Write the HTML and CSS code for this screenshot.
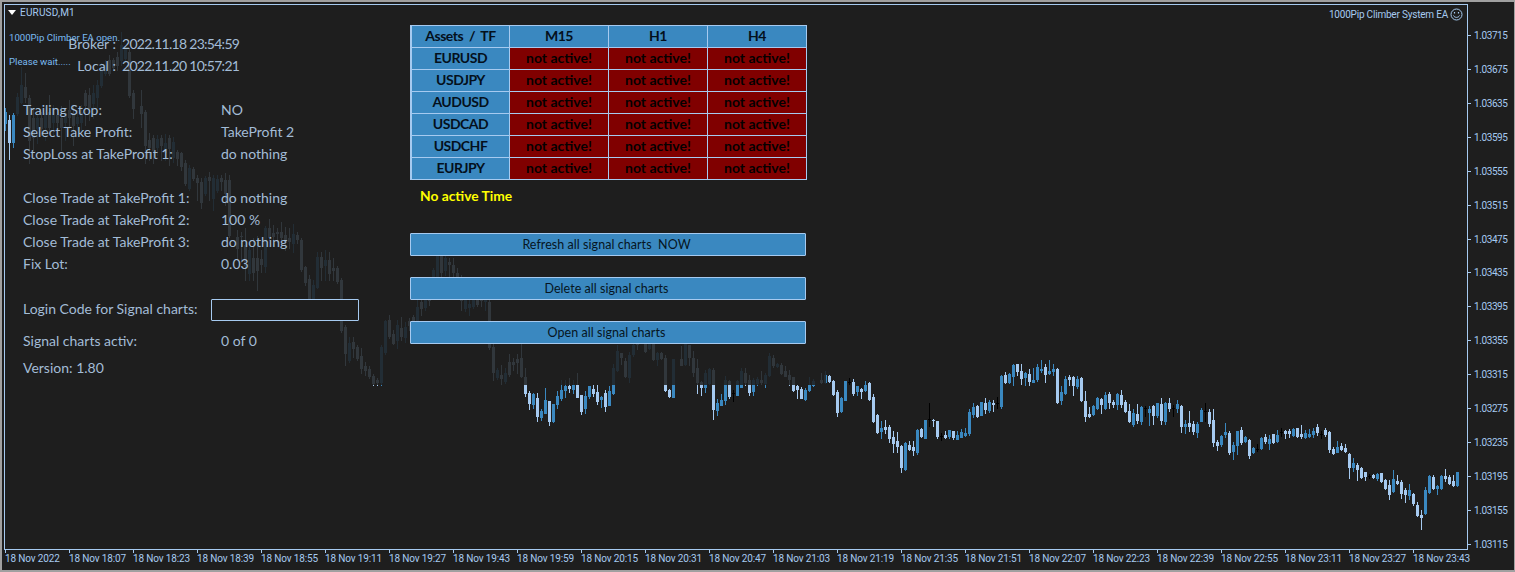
FILE: index.html
```html
<!DOCTYPE html>
<html lang="en">
<head>
<meta charset="utf-8">
<title>EURUSD,M1</title>
<link rel="stylesheet" href="styles.css">
</head>
<body>
<div class="window">
  <div class="plot">
    <svg id="candles" class="candles" viewBox="5 5 1462 544" width="1462" height="544" shape-rendering="crispEdges"></svg>
    <div class="dim"></div>

    <div class="symbol">
      <svg class="tri" width="8" height="5" viewBox="0 0 8 5"><path d="M0 0H8L4 5Z" fill="#fff"/></svg>
      <span>EURUSD,M1</span>
    </div>
    <div class="ea-name">
      <span>1000Pip Climber System EA</span>
      <svg width="13" height="13" viewBox="0 0 13 13" fill="none" stroke="#a6caf0"><circle cx="6.5" cy="6.5" r="5.5"/><path d="M3.5 7.5C4.5 10 8.5 10 9.5 7.5"/><path d="M4.5 4v1.5M8.5 4v1.5" stroke-width="1.2"/></svg>
    </div>
    <div class="notice notice-a">1000Pip Climber EA open.</div>
    <div class="notice notice-b">Please wait.....</div>

    <div class="ea">
      <section class="settings">
        <div class="clock"><span class="clock-k">Broker :</span><span class="clock-v">2022.11.18 23:54:59</span></div>
        <div class="clock clock-end"><span class="clock-k">Local :</span><span class="clock-v">2022.11.20 10:57:21</span></div>

        <div class="row"><span>Trailing Stop:</span><span>NO</span></div>
        <div class="row"><span>Select Take Profit:</span><span>TakeProfit 2</span></div>
        <div class="row row-end"><span>StopLoss at TakeProfit 1:</span><span>do nothing</span></div>

        <div class="row"><span>Close Trade at TakeProfit 1:</span><span>do nothing</span></div>
        <div class="row"><span>Close Trade at TakeProfit 2:</span><span>100 %</span></div>
        <div class="row"><span>Close Trade at TakeProfit 3:</span><span>do nothing</span></div>
        <div class="row row-end"><span>Fix Lot:</span><span>0.03</span></div>

        <div class="row row-login"><span>Login Code for Signal charts:</span><input class="login" type="text" aria-label="Login Code"></div>
        <div class="row row-signal"><span>Signal charts activ:</span><span>0 of 0</span></div>
        <div class="row row-version"><span>Version: 1.80</span></div>
      </section>

      <section class="control">
        <div class="matrix">
          <div class="cell head">Assets &nbsp;/&nbsp; TF</div><div class="cell head">M15</div><div class="cell head">H1</div><div class="cell head">H4</div>
          <div class="cell head">EURUSD</div><div class="cell off">not active!</div><div class="cell off">not active!</div><div class="cell off">not active!</div>
          <div class="cell head">USDJPY</div><div class="cell off">not active!</div><div class="cell off">not active!</div><div class="cell off">not active!</div>
          <div class="cell head">AUDUSD</div><div class="cell off">not active!</div><div class="cell off">not active!</div><div class="cell off">not active!</div>
          <div class="cell head">USDCAD</div><div class="cell off">not active!</div><div class="cell off">not active!</div><div class="cell off">not active!</div>
          <div class="cell head">USDCHF</div><div class="cell off">not active!</div><div class="cell off">not active!</div><div class="cell off">not active!</div>
          <div class="cell head">EURJPY</div><div class="cell off">not active!</div><div class="cell off">not active!</div><div class="cell off">not active!</div>
        </div>
        <div class="status">No active Time</div>
        <div class="actions">
          <button class="action" type="button">Refresh all signal charts&nbsp; NOW</button>
          <button class="action" type="button">Delete all signal charts</button>
          <button class="action" type="button">Open all signal charts</button>
        </div>
      </section>
    </div>
  </div>

  <div class="prices">
    <div class="price">1.03715</div><div class="price">1.03675</div><div class="price">1.03635</div><div class="price">1.03595</div>
    <div class="price">1.03555</div><div class="price">1.03515</div><div class="price">1.03475</div><div class="price">1.03435</div>
    <div class="price">1.03395</div><div class="price">1.03355</div><div class="price">1.03315</div><div class="price">1.03275</div>
    <div class="price">1.03235</div><div class="price">1.03195</div><div class="price">1.03155</div><div class="price">1.03115</div>
  </div>

  <div class="times">
    <div class="time">18 Nov 2022</div><div class="time">18 Nov 18:07</div><div class="time">18 Nov 18:23</div><div class="time">18 Nov 18:39</div>
    <div class="time">18 Nov 18:55</div><div class="time">18 Nov 19:11</div><div class="time">18 Nov 19:27</div><div class="time">18 Nov 19:43</div>
    <div class="time">18 Nov 19:59</div><div class="time">18 Nov 20:15</div><div class="time">18 Nov 20:31</div><div class="time">18 Nov 20:47</div>
    <div class="time">18 Nov 21:03</div><div class="time">18 Nov 21:19</div><div class="time">18 Nov 21:35</div><div class="time">18 Nov 21:51</div>
    <div class="time">18 Nov 22:07</div><div class="time">18 Nov 22:23</div><div class="time">18 Nov 22:39</div><div class="time">18 Nov 22:55</div>
    <div class="time">18 Nov 23:11</div><div class="time">18 Nov 23:27</div><div class="time">18 Nov 23:43</div>
  </div>
</div>
<script src="candles.js"></script>
</body>
</html>
```

FILE: styles.css
```css
* { box-sizing: border-box; }
html, body { margin: 0; height: 100%; background: #1e1e1e; overflow: hidden; }
.window {
  width: 1515px; height: 572px;
  border: 2px solid #a0a0a0; border-width: 2px 1px 2px 2px;
  padding: 2px 0 0 2px;
  display: grid;
  grid-template-columns: 1464px 1fr;
  grid-template-rows: 546px 1fr;
  font-family: Roboto, sans-serif;
  font-size: 10px;
  color: #a6caf0;
}
.plot { position: relative; border: 1px solid #a6caf0; overflow: hidden; }
.candles { position: absolute; left: 0; top: 0; display: block; }
.dim { position: absolute; left: 11px; top: 14px; width: 810px; height: 366px; background: rgba(30,30,30,.86); }

.symbol { position: absolute; left: 3px; top: 0; height: 14px; display: flex; align-items: center; gap: 4px; letter-spacing: .2px; }
.ea-name { position: absolute; right: 4px; top: 2px; height: 14px; display: flex; align-items: center; gap: 2px; letter-spacing: -.2px; }
.notice { position: absolute; left: 4px; color: #7abbf2; font-size: 9.6px; line-height: 12px; white-space: nowrap; }
.notice-a { top: 27px; }
.notice-b { top: 51px; }

.ea {
  position: absolute; inset: 0;
  display: grid; grid-template-columns: 405px 397px;
  font-family: Lato, sans-serif; font-size: 14px;
}
.settings { padding: 27px 0 0 18px; color: #a3bcd6; }
.clock { display: flex; height: 22px; align-items: center; gap: 6px; }
.clock-k { width: 93px; text-align: right; }
.clock-v { letter-spacing: -.72px; }
.clock-end { margin-bottom: 22px; }
.row { display: grid; grid-template-columns: 198px 1fr; height: 22px; align-items: center; white-space: nowrap; }
.row-end { margin-bottom: 22px; }
.row-login { grid-template-columns: 188px 148px; }
.login { width: 148px; height: 22px; padding: 0; align-self: start; margin-top: 3px; background: #1e1e1e; border: 1px solid #a6caf0; border-radius: 1px; }
.row-signal { margin-top: 11px; }
.row-version { margin-top: 5px; }

.control { padding-top: 20px; }
.matrix {
  display: grid;
  grid-template-columns: 97px 98px 98px 98px;
  grid-auto-rows: 21px;
  gap: 1px;
  width: 397px;
  padding: 1px 1px 1px 2px;
  background: #a6caf0;
  font-weight: 700; font-size: 14px;
  color: #04101c;
}
.cell { display: flex; align-items: center; justify-content: center; white-space: nowrap; padding-bottom: 2px; }
.head { background: #3a88c0; letter-spacing: -.5px; }
.off { background: #800000; color: #050000; }
.status { height: 22px; margin: 4px 0 27px 10px; display: flex; align-items: center; color: #ffff00; font-weight: 700; font-size: 13.8px; }
.actions { display: flex; flex-direction: column; gap: 21px; width: 396px; }
.action {
  display: block; width: 396px; height: 23px; padding: 0 3px 0 0;
  background: #3a88c0; border: 1px solid #a6caf0; border-radius: 1px;
  color: #061522; font-family: Lato, sans-serif; font-size: 12.5px; letter-spacing: .05px;
}

.prices { padding-top: 14px; display: grid; grid-auto-rows: 33.93px; }
.price { position: relative; padding-left: 6px; height: 34px; line-height: 35px; letter-spacing: -.4px; }
.price::before { content: ""; position: absolute; left: 0; top: 17px; width: 3px; height: 1px; background: #a6caf0; }

.times { grid-column: 1 / -1; display: flex; padding-left: 1px; overflow: hidden; }
.time { position: relative; flex: 0 0 64px; padding-top: 1px; line-height: 16px; white-space: nowrap; letter-spacing: -.15px; }
.time::before { content: ""; position: absolute; left: 0; top: 0; width: 1px; height: 3px; background: #a6caf0; }
```

FILE: candles.js
```js
// [high, bodyTop, bodyBottom, low, kind] in page pixels; kind 0 up, 1 down, 2 doji; one bar every 4px from x=4.
var bars = "108 112 123 130 0|115 120 142 159 1|113 115 142 147 0|93 97 113 115 0|67 85 102 103 0|73 87 97 102 1|95 98 140 163 1|110 118 137 150 1|115 118 128 143 0|112 118 128 135 1|106 113 127 140 0|95 112 127 133 1|105 108 122 135 0|110 115 122 127 1|106 118 127 150 1|108 113 122 140 0|100 110 117 128 1|105 113 125 145 1|110 117 123 130 0|105 112 122 130 0|90 93 105 125 1|88 95 107 120 1|85 93 103 118 0|80 85 97 107 0|63 68 85 87 0|60 65 73 75 0|55 60 73 75 1|58 60 67 70 1|52 57 65 70 1|32 45 60 65 0|46 48 58 62 0|48 52 95 97 1|90 93 108 118 1||90 106 113 127 1|110 112 145 163 1|133 140 147 160 1|135 138 150 163 1|135 139 147 155 0|135 138 145 160 1|134 143 152 160 0|135 138 148 165 1|137 142 157 162 0|150 152 158 165 1|152 153 166 170 1|160 163 183 185 1|165 168 188 190 0|167 169 178 180 1|175 178 182 200 1|178 182 202 208 1|176 178 193 195 0|172 177 180 200 1|175 178 198 210 0|175 179 190 192 0|175 178 181 190 1|173 180 193 205 1|175 180 235 237 1||230 237 248 260 1|232 236 236 262 1|228 245 265 280 1|245 250 273 280 0|238 258 272 280 1|236 258 270 290 1|250 259 264 272 1|226 228 266 272 0|219 228 237 240 1|225 233 236 245 1|228 232 233 242 1|222 232 237 245 1|227 235 242 250 1|228 238 241 248 1|224 234 243 252 0|232 235 239 243 1|238 240 269 271 1|266 267 282 285 1|275 279 298 300 1|280 285 298 300 0|252 257 287 288 0|252 257 267 280 1|250 260 265 280 0|252 260 273 280 1|258 268 270 280 1|266 268 281 283 1|278 280 330 332 1|325 327 353 365 1|337 343 360 362 0|337 342 348 357 1|345 347 358 360 1|348 356 368 373 1|362 366 370 375 1|366 369 376 378 1|374 376 383 385 1|378 380 382 385 1|345 347 382 385 0|320 321 352 354 0|315 320 336 338 1|330 334 343 344 1|320 325 340 348 0|317 328 336 340 1|322 327 337 342 0|318 321 325 330 1|315 317 322 332 1|300 307 322 325 0|298 302 308 315 1|295 298 307 310 0|285 290 300 305 1|268 270 290 295 0|250 255 277 280 0|252 255 272 277 1|250 258 270 275 0|258 262 264 278 1|258 265 272 280 1|268 273 277 285 1|275 278 300 310 1|295 299 308 311 0|300 304 307 315 0|295 299 306 308 0|297 300 304 306 1|295 298 300 306 1|297 299 301 310 0|300 302 347 349 1|340 347 372 380 1|368 370 377 379 0|365 375 378 384 1|368 373 381 383 0|354 362 374 376 1|358 362 364 370 1|354 359 362 373 1|343 358 376 377 1|368 377 393 396 1|391 393 403 409 1|393 394 404 408 0|393 398 416 421 1|409 411 417 420 0|388 400 413 413 0|401 401 421 425 1|404 404 421 422 0|391 396 404 408 0|380 390 398 400 0|380 386 390 397 0|378 386 388 392 1|380 385 389 393 0|373 385 397 397 1|395 395 411 414 1|391 396 408 413 0|386 386 396 398 0|385 389 393 396 1|385 392 401 404 1|396 397 399 407 0|390 393 406 411 1|386 391 405 405 0|364 368 393 394 0|345 351 370 371 0|353 353 357 364 1|358 361 376 377 1|352 355 377 382 0|340 345 354 356 0|340 343 344 349 1||343 343 351 352 1|343 343 348 349 0|343 343 359 360 1|352 353 359 365 0|352 353 358 359 1|355 358 390 391 1|389 390 396 397 1|359 359 397 397 0||346 359 365 365 1|344 344 364 365 0|345 345 357 365 1|351 358 372 376 1|359 368 382 393 1|381 382 387 395 1|370 373 387 392 0|368 369 383 384 0|368 370 409 419 1|399 403 410 415 0|394 400 405 405 0|376 380 400 404 0|380 381 396 398 1|390 393 393 401 2|380 381 395 395 0|368 371 387 387 0|368 373 382 385 1|375 380 392 395 1|378 380 391 395 0|377 379 383 385 0|371 380 382 384 1|373 375 383 387 0|353 356 375 376 0|355 358 365 367 1|363 364 366 367 0|363 365 373 374 1|366 371 376 376 1|370 375 379 385 1|377 377 390 391 1|385 386 389 398 1|387 389 398 398 1|388 390 399 400 0|377 385 390 391 0|379 381 385 386 0||373 380 382 383 1|371 375 382 383 0|375 376 381 382 1|380 381 394 395 1|390 392 412 416 1|397 398 411 412 0|381 381 400 400 0|378 382 382 384 2|379 382 393 395 1|386 386 391 395 0|388 389 391 398 1|381 385 390 391 0|382 383 399 400 1|394 397 421 422 1|414 415 432 433 1|421 428 431 438 0|420 427 429 433 1|425 427 438 442 1|431 437 443 452 1|432 441 446 452 1|445 446 467 472 1|442 443 469 470 0|441 445 449 450 1|441 447 450 455 1|429 430 452 454 0|428 429 436 437 1|420 420 438 438 0|403 419 419 426 2|419 420 420 426 1|421 421 436 438 1|433 436 436 440 2|431 435 437 438 1|430 430 436 438 0|431 431 437 439 1|431 435 439 439 0|429 432 437 437 0|428 433 435 436 0|409 412 433 435 0|403 407 414 417 0|405 406 416 417 1|402 402 415 415 0|398 403 409 413 1|400 402 410 412 0|400 403 404 411 1|397 403 403 408 2|375 376 406 408 0|372 375 382 383 1|373 374 382 383 0|364 365 376 385 0|364 364 371 375 1|364 371 378 384 1|372 373 377 385 0|369 374 381 385 1|368 380 382 382 0|364 367 379 381 0|360 369 370 372 0|364 367 374 382 1|360 371 373 374 0|364 369 371 375 0|368 369 402 403 1|386 392 400 404 0|376 379 393 394 0|375 377 379 385 1|376 377 385 395 1|376 379 386 388 0|377 378 400 401 1|391 401 416 421 1|407 414 416 417 1|405 406 414 415 0|397 398 408 409 0|398 399 404 413 1|392 395 408 409 0|392 394 402 408 1|400 402 404 407 1|393 394 404 409 0|390 395 404 407 1|400 402 411 412 1|404 411 421 422 1|409 413 424 426 0|404 414 420 423 1|406 407 421 424 0|406 408 408 416 2|406 409 412 425 0|405 406 415 424 1|403 403 415 417 0|398 404 420 424 1|402 403 421 424 0|398 403 408 411 1|405 408 408 416 2|400 404 408 412 0|405 406 426 432 1|420 424 426 433 0|411 423 426 431 1|421 424 431 434 1|422 424 432 437 0|408 410 421 421 0|403 411 411 421 2|409 412 423 426 1|409 420 442 446 1|440 442 445 450 1|435 436 444 446 0|423 432 434 437 0|431 433 452 454 1|442 445 451 459 0|431 431 445 454 0|427 430 442 444 1|436 437 441 442 0|439 440 455 458 1|447 448 452 453 0|444 449 449 451 2|437 438 448 449 0|434 437 441 443 1|435 439 443 449 0|434 434 442 443 1|430 435 441 442 0|428 432 432 436 2|430 431 433 438 1|429 431 433 437 1|428 429 435 436 0|428 428 436 437 1|425 434 436 438 1|430 433 437 438 0|429 434 436 437 0|428 431 434 437 0|424 427 432 435 1|431 434 434 438 2|428 430 434 436 1|431 432 449 452 1|447 449 453 454 1|441 447 452 452 0|443 446 449 450 1|444 448 451 452 1|453 454 467 478 1|458 463 467 471 0|463 465 469 480 1|467 468 477 478 1|472 472 476 480 1|474 476 476 478 2|474 475 477 478 1|473 474 478 480 0|473 473 481 482 1|479 480 488 489 1|480 485 494 499 1|470 479 491 492 0|475 481 483 484 1|480 482 493 498 1|488 490 494 502 1|484 490 495 499 0|493 494 503 505 1|502 505 515 516 1|510 515 517 529 1|487 490 513 514 0|475 476 492 493 0|475 477 488 489 1|485 486 488 494 0|475 476 488 489 0|469 476 478 481 1|475 477 483 484 1|475 481 485 486 1|472 472 485 486 0";
var svg = document.getElementById("candles");
var colors = ["#3a88c0", "#a6caf0", "#000000"];
var out = "";
bars.split("|").forEach(function (b, i) {
  if (!b) return;
  var v = b.split(" ").map(Number), x = 4 * (i + 1), c = colors[v[4]];
  out += '<rect x="' + (x + 1) + '" y="' + v[0] + '" width="1" height="' + (v[3] - v[0] + 1) + '" fill="' + c + '"/>';
  out += '<rect x="' + x + '" y="' + v[1] + '" width="3" height="' + (v[2] - v[1] + 1) + '" fill="' + c + '"/>';
});
svg.innerHTML = out;
```
